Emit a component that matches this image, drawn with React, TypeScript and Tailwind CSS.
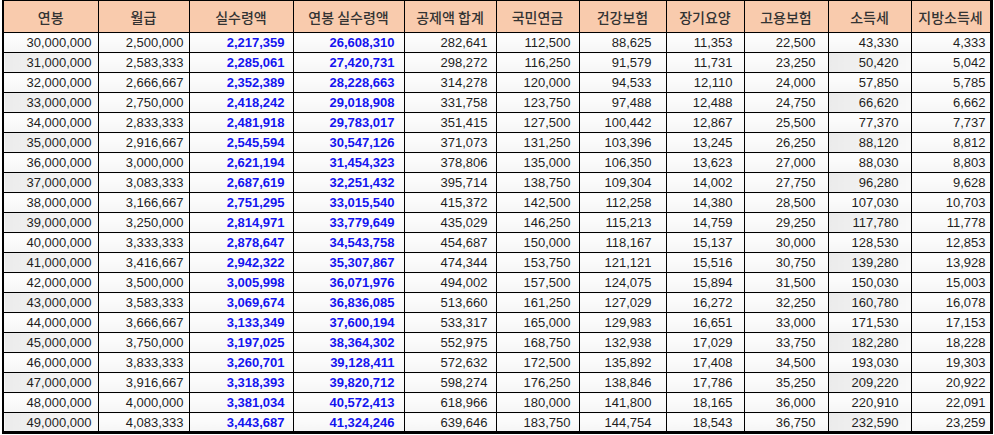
import React from 'react';

const headers = ['연봉', '월급', '실수령액', '연봉 실수령액', '공제액 합계', '국민연금', '건강보험', '장기요양', '고용보험', '소득세', '지방소득세'];
const widths = ['w-[95px]', 'w-[91px]', 'w-[104px]', 'w-[111px]', 'w-[92px]', 'w-[83px]', 'w-[87px]', 'w-[78px]', 'w-[84px]', 'w-[83px]', 'w-[80px]'];
const pads = ['pr-[6px]', 'pr-[5px]', 'pr-[8px]', 'pr-[9px]', 'pr-[8px]', 'pr-[8px]', 'pr-[14px]', 'pr-[11px]', 'pr-[12px]', 'pr-[12px]', 'pr-[4px]'];

const rows = [
  '30,000,000 2,500,000 2,217,359 26,608,310 282,641 112,500 88,625 11,353 22,500 43,330 4,333',
  '31,000,000 2,583,333 2,285,061 27,420,731 298,272 116,250 91,579 11,731 23,250 50,420 5,042',
  '32,000,000 2,666,667 2,352,389 28,228,663 314,278 120,000 94,533 12,110 24,000 57,850 5,785',
  '33,000,000 2,750,000 2,418,242 29,018,908 331,758 123,750 97,488 12,488 24,750 66,620 6,662',
  '34,000,000 2,833,333 2,481,918 29,783,017 351,415 127,500 100,442 12,867 25,500 77,370 7,737',
  '35,000,000 2,916,667 2,545,594 30,547,126 371,073 131,250 103,396 13,245 26,250 88,120 8,812',
  '36,000,000 3,000,000 2,621,194 31,454,323 378,806 135,000 106,350 13,623 27,000 88,030 8,803',
  '37,000,000 3,083,333 2,687,619 32,251,432 395,714 138,750 109,304 14,002 27,750 96,280 9,628',
  '38,000,000 3,166,667 2,751,295 33,015,540 415,372 142,500 112,258 14,380 28,500 107,030 10,703',
  '39,000,000 3,250,000 2,814,971 33,779,649 435,029 146,250 115,213 14,759 29,250 117,780 11,778',
  '40,000,000 3,333,333 2,878,647 34,543,758 454,687 150,000 118,167 15,137 30,000 128,530 12,853',
  '41,000,000 3,416,667 2,942,322 35,307,867 474,344 153,750 121,121 15,516 30,750 139,280 13,928',
  '42,000,000 3,500,000 3,005,998 36,071,976 494,002 157,500 124,075 15,894 31,500 150,030 15,003',
  '43,000,000 3,583,333 3,069,674 36,836,085 513,660 161,250 127,029 16,272 32,250 160,780 16,078',
  '44,000,000 3,666,667 3,133,349 37,600,194 533,317 165,000 129,983 16,651 33,000 171,530 17,153',
  '45,000,000 3,750,000 3,197,025 38,364,302 552,975 168,750 132,938 17,029 33,750 182,280 18,228',
  '46,000,000 3,833,333 3,260,701 39,128,411 572,632 172,500 135,892 17,408 34,500 193,030 19,303',
  '47,000,000 3,916,667 3,318,393 39,820,712 598,274 176,250 138,846 17,786 35,250 209,220 20,922',
  '48,000,000 4,000,000 3,381,034 40,572,413 618,966 180,000 141,800 18,165 36,000 220,910 22,091',
  '49,000,000 4,083,333 3,443,687 41,324,246 639,646 183,750 144,754 18,543 36,750 232,590 23,259',
].map((r) => r.split(' '));

export default function App() {
  return (
    <div className="w-[994px] h-[435px] bg-white pl-[2px] font-['Liberation_Sans',Arial,sans-serif]">
      <table className="table-fixed border-collapse border-l-2 border-b-[3px] border-r-[3px] border-black text-[13px] leading-none">
        <colgroup>
          {widths.map((w, i) => (
            <col key={i} className={w} />
          ))}
        </colgroup>
        <thead>
          <tr className="h-[32px]">
            {headers.map((h) => (
              <th
                key={h}
                className="border border-black bg-[#f9cbad] text-center font-medium text-[14px] text-[#333] font-['Noto_Sans_CJK_KR','Noto_Sans',sans-serif] pt-[1px]"
              >
                {h}
              </th>
            ))}
          </tr>
        </thead>
        <tbody>
          {rows.map((r, ri) => (
            <tr key={ri} className="h-[20px]">
              {r.map((v, ci) => {
                const shaded = ri % 2 === 1 && (ci === 0 || ci === 9);
                const blue = ci === 2 || ci === 3;
                return (
                  <td
                    key={ci}
                    className={`border border-black text-right ${pads[ci]} ${
                      shaded
                        ? 'bg-linear-to-r from-[#ebebeb] to-[#f8f8f8]'
                        : 'bg-linear-to-b from-white to-[#f5f5f5]'
                    } ${blue ? 'font-bold text-[#1414f0]' : 'text-[#1e1e1e]'}`}
                  >
                    {v}
                  </td>
                );
              })}
            </tr>
          ))}
        </tbody>
      </table>
    </div>
  );
}
